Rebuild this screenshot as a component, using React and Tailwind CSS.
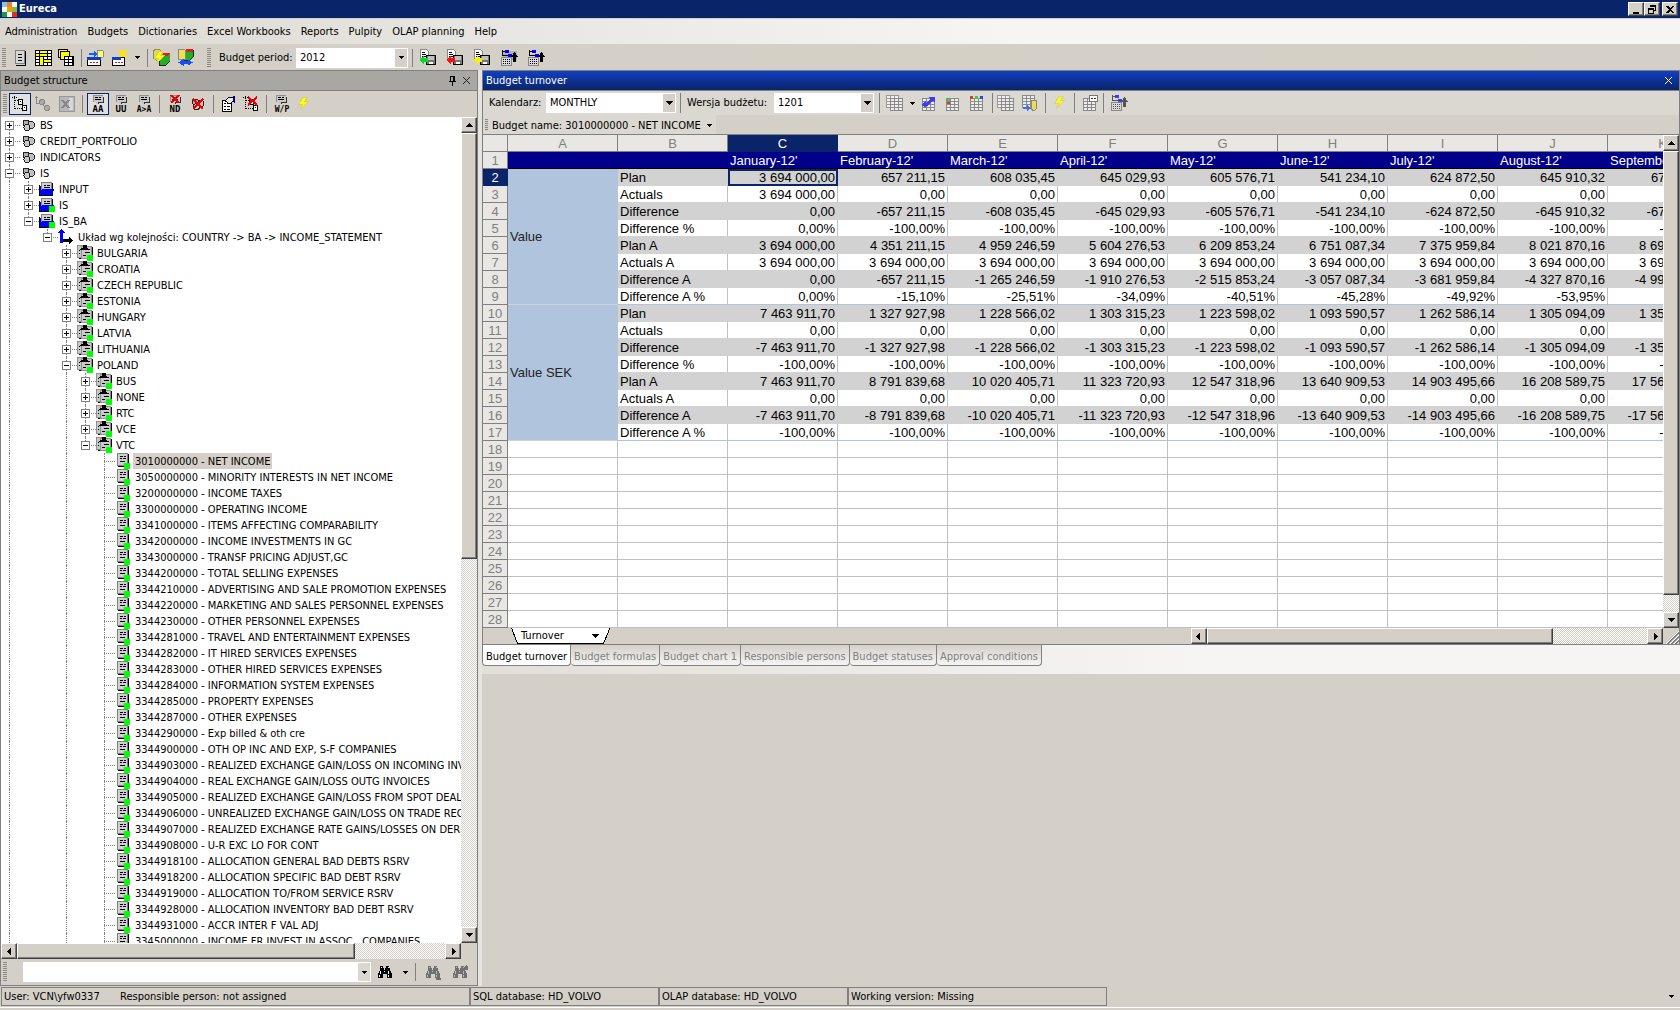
import { clsx } from "clsx";

/* ---------- data ---------- */

const MENU = ["Administration", "Budgets", "Dictionaries", "Excel Workbooks", "Reports", "Pulpity", "OLAP planning", "Help"];

// depth, label, icon, state ("+", "-" or ""), last sibling
const TREE = [
  [0, "BS", "group", "+"],
  [0, "CREDIT_PORTFOLIO", "group", "+"],
  [0, "INDICATORS", "group", "+"],
  [0, "IS", "group", "-"],
  [1, "INPUT", "folder", "+"],
  [1, "IS", "folderOk", "+"],
  [1, "IS_BA", "folderOk", "-", true],
  [2, "Układ wg kolejności: COUNTRY -> BA -> INCOME_STATEMENT", "axes", "-", true],
  [3, "BULGARIA", "pages", "+"],
  [3, "CROATIA", "pages", "+"],
  [3, "CZECH REPUBLIC", "pages", "+"],
  [3, "ESTONIA", "pages", "+"],
  [3, "HUNGARY", "pages", "+"],
  [3, "LATVIA", "pages", "+"],
  [3, "LITHUANIA", "pages", "+"],
  [3, "POLAND", "pages", "-"],
  [4, "BUS", "pages", "+"],
  [4, "NONE", "pages", "+"],
  [4, "RTC", "pages", "+"],
  [4, "VCE", "pages", "+"],
  [4, "VTC", "pages", "-", true],
  ...[
    "3010000000 - NET INCOME",
    "3050000000 - MINORITY INTERESTS IN NET INCOME",
    "3200000000 - INCOME TAXES",
    "3300000000 - OPERATING INCOME",
    "3341000000 - ITEMS AFFECTING COMPARABILITY",
    "3342000000 - INCOME INVESTMENTS IN GC",
    "3343000000 - TRANSF PRICING ADJUST,GC",
    "3344200000 - TOTAL SELLING EXPENSES",
    "3344210000 - ADVERTISING AND SALE PROMOTION EXPENSES",
    "3344220000 - MARKETING AND SALES PERSONNEL EXPENSES",
    "3344230000 - OTHER PERSONNEL EXPENSES",
    "3344281000 - TRAVEL AND ENTERTAINMENT EXPENSES",
    "3344282000 - IT HIRED SERVICES EXPENSES",
    "3344283000 - OTHER HIRED SERVICES EXPENSES",
    "3344284000 - INFORMATION SYSTEM EXPENSES",
    "3344285000 - PROPERTY EXPENSES",
    "3344287000 - OTHER EXPENSES",
    "3344290000 - Exp billed & oth cre",
    "3344900000 - OTH OP INC AND EXP, S-F COMPANIES",
    "3344903000 - REALIZED EXCHANGE GAIN/LOSS ON INCOMING INVOICES",
    "3344904000 - REAL EXCHANGE GAIN/LOSS OUTG INVOICES",
    "3344905000 - REALIZED EXCHANGE GAIN/LOSS FROM SPOT DEALS",
    "3344906000 - UNREALIZED EXCHANGE GAIN/LOSS ON TRADE RECEIVABLES",
    "3344907000 - REALIZED EXCHANGE RATE GAINS/LOSSES ON DERIVATIVES",
    "3344908000 - U-R EXC LO FOR CONT",
    "3344918100 - ALLOCATION GENERAL BAD DEBTS RSRV",
    "3344918200 - ALLOCATION SPECIFIC BAD DEBT RSRV",
    "3344919000 - ALLOCATION TO/FROM SERVICE RSRV",
    "3344928000 - ALLOCATION INVENTORY BAD DEBT RSRV",
    "3344931000 - ACCR INTER F VAL ADJ",
    "3345000000 - INCOME FR INVEST IN ASSOC . COMPANIES",
  ].map((label) => [5, label, "page", ""]),
];

const COLUMNS = ["A", "B", "C", "D", "E", "F", "G", "H", "I", "J", "K"];
const MONTHS = ["January-12'", "February-12'", "March-12'", "April-12'", "May-12'", "June-12'", "July-12'", "August-12'", "September-12'"];

const repeat = (v) => Array(9).fill(v);
const ROWS = [
  ["Plan", ["3 694 000,00", "657 211,15", "608 035,45", "645 029,93", "605 576,71", "541 234,10", "624 872,50", "645 910,32", "671 290,11"]],
  ["Actuals", ["3 694 000,00", ...Array(8).fill("0,00")]],
  ["Difference", ["0,00", "-657 211,15", "-608 035,45", "-645 029,93", "-605 576,71", "-541 234,10", "-624 872,50", "-645 910,32", "-671 290,11"]],
  ["Difference %", ["0,00%", ...Array(8).fill("-100,00%")]],
  ["Plan A", ["3 694 000,00", "4 351 211,15", "4 959 246,59", "5 604 276,53", "6 209 853,24", "6 751 087,34", "7 375 959,84", "8 021 870,16", "8 693 160,27"]],
  ["Actuals A", repeat("3 694 000,00")],
  ["Difference A", ["0,00", "-657 211,15", "-1 265 246,59", "-1 910 276,53", "-2 515 853,24", "-3 057 087,34", "-3 681 959,84", "-4 327 870,16", "-4 999 160,27"]],
  ["Difference A %", ["0,00%", "-15,10%", "-25,51%", "-34,09%", "-40,51%", "-45,28%", "-49,92%", "-53,95%", "-57,51%"]],
  ["Plan", ["7 463 911,70", "1 327 927,98", "1 228 566,02", "1 303 315,23", "1 223 598,02", "1 093 590,57", "1 262 586,14", "1 305 094,09", "1 356 374,08"]],
  ["Actuals", repeat("0,00")],
  ["Difference", ["-7 463 911,70", "-1 327 927,98", "-1 228 566,02", "-1 303 315,23", "-1 223 598,02", "-1 093 590,57", "-1 262 586,14", "-1 305 094,09", "-1 356 374,08"]],
  ["Difference %", repeat("-100,00%")],
  ["Plan A", ["7 463 911,70", "8 791 839,68", "10 020 405,71", "11 323 720,93", "12 547 318,96", "13 640 909,53", "14 903 495,66", "16 208 589,75", "17 564 963,83"]],
  ["Actuals A", repeat("0,00")],
  ["Difference A", ["-7 463 911,70", "-8 791 839,68", "-10 020 405,71", "-11 323 720,93", "-12 547 318,96", "-13 640 909,53", "-14 903 495,66", "-16 208 589,75", "-17 564 963,83"]],
  ["Difference A %", repeat("-100,00%")],
];
const EMPTY_ROWS = [18, 19, 20, 21, 22, 23, 24, 25, 26, 27, 28];

/* ---------- drawing helpers ---------- */

function Svg({ w = 16, h = 16, label, children, className }) {
  return (
    <svg width={w} height={h} viewBox={`0 0 ${w} ${h}`} shapeRendering="crispEdges" className={clsx("shrink-0", className)} aria-hidden={!label} aria-label={label} fill="none">
      {children}
    </svg>
  );
}

const R = ({ x, y, w, h, f = "#000" }) => <rect x={x} y={y} width={w} height={h} fill={f} />;

function Sheet({ x, y, s = 1, cols = 3, rows = 4, fill = "#fff", line = "#000" }) {
  const cw = 4 * s;
  const ch = 3 * s;
  const W = cols * cw + 1;
  const H = rows * ch + 1;
  return (
    <g>
      <R x={x} y={y} w={W} h={H} f={fill} />
      {Array.from({ length: rows + 1 }, (_, i) => <R key={"r" + i} x={x} y={y + i * ch} w={W} h={1} f={line} />)}
      {Array.from({ length: cols + 1 }, (_, i) => <R key={"c" + i} x={x + i * cw} y={y} w={1} h={H} f={line} />)}
    </g>
  );
}

const Cross = () => <path d="M4 0l8 8M12 0L4 8" stroke="#f00000" strokeWidth="2" />;
const Bolt = () => <path d="M5 0h5L7 4h4L2 13l3-6H1z" fill="#ffff00" stroke="#d8d060" strokeWidth="1" />;
const Green = ({ x, y }) => <R x={x} y={y} w={6} h={6} f="#00ff00" />;

function Monitor() {
  return (
    <g>
      <path d="M3 0h9l1 1v6H9v2H6V7H3z" fill="#c8c8c8" />
      <path d="M3.500 7V.5h9" stroke="#909090" />
      <R x={5} y={2} w={3} h={1} />
      <R x={9} y={2} w={2} h={1} />
      <R x={5} y={4} w={6} h={1} />
      <path d="M13.500 2v5.500h-5v1" stroke="#333" />
    </g>
  );
}

function Caption({ children }) {
  return <text x="8" y="17" textAnchor="middle" fontFamily="DejaVu Sans Mono" fontWeight="bold" fontSize="9" fill="#000">{children}</text>;
}

function Tree2() {
  return (
    <g>
      <path d="M2.500 0v13M3 4.500h4M3 12.500h7M0 1.500h5" stroke="#000" strokeDasharray="1 1" />
      <rect x="6.500" y="3.500" width="4" height="5" fill="#fff" stroke="#000" />
      <rect x="10.500" y="9.500" width="4" height="5" fill="#fff" stroke="#000" />
      <R x={8} y={5} w={1} h={1} />
      <R x={12} y={11} w={1} h={1} />
    </g>
  );
}

function Calc({ gray }) {
  const k = gray ? "#555" : "#000";
  const b = gray ? "#4040e8" : "#0000ff";
  return (
    <g>
      <path d="M1.500 0v6M1.500 1.500h3M2 5.500h5" stroke={k} />
      <R x={4} y={0} w={4} h={3} f={b} />
      <R x={7} y={4} w={4} h={3} f={b} />
      <rect x=".5" y="7.500" width="10" height="8" fill="#d8d8d8" stroke="#888" />
      <path d="M2 9.500h7M2 11.500h7M2 13.500h7" stroke={k} strokeDasharray="1 1" />
      <path d="M12 12V7h-2l3.500-5L17 7h-2v5z" fill={k} />
    </g>
  );
}

function SaveDoc({ color }) {
  return (
    <Svg w={18} h={17}>
      <path d="M1.500.5h6l2 2v9h-8z" fill="#fff" stroke="#888" />
      <path d="M3 3.500h3M3 5.500h4M3 7.500h4" stroke="#000" />
      <rect x="7.500" y="6.500" width="9" height="9" fill="#777" stroke="#000" />
      <R x={9} y={7} w={6} h={4} f="#c0c0c0" />
      <R x={10} y={13} w={4} h={2} f="#fff" />
      <path d="M0 11l5-4v2h4v4H5v3z" fill={color} />
    </Svg>
  );
}

function GreyGrid({ children, double }) {
  return (
    <Svg w={18} h={16}>
      {double && <Sheet x={0} y={0} fill="#f0f0f0" line="#999" rows={4} />}
      <Sheet x={double ? 4 : 2} y={3} fill="#ececec" line="#8a8a8a" rows={4} />
      {children}
    </Svg>
  );
}

function Binoculars({ c = "#000", hi = "#fff", children }) {
  return (
    <Svg w={16} h={15}>
      <path d="M3 1h3v2h1v2h1V3h1V1h3v2h1v3h1v2h1v5h-5V9H6v4H1V8h1V6h1z" fill={c} />
      <R x={4} y={2} w={1} h={1} f={hi} />
      <R x={11} y={2} w={1} h={1} f={hi} />
      <R x={3} y={6} w={1} h={3} f={hi} />
      <R x={7} y={6} w={1} h={1} f={hi} />
      <R x={11} y={6} w={1} h={3} f={hi} />
      <R x={2} y={10} w={1} h={2} f={hi} />
      <R x={11} y={10} w={1} h={2} f={hi} />
      {children}
    </Svg>
  );
}

function Arrow({ dir = "down", small, color = "#000" }) {
  const d = {
    down: "M0 1h7v1H6v1H5v1H4v1H3V4H2V3H1V2H0z",
    up: "M3 1h1v1h1v1h1v1h1v1H0V4h1V3h1V2h1z",
    left: "M4 0h1v7H4V6H3V5H2V4H1V3h1V2h1V1h1z",
    right: "M2 0h1v1h1v1h1v1h1v1H5v1H4v1H3v1H2z",
  }[dir];
  return small ? (
    <Svg w={5} h={3}><path d="M0 0h5v1H4v1H3v1H2V2H1V1H0z" fill={color} /></Svg>
  ) : (
    <Svg w={7} h={7}><path d={d} fill={color} /></Svg>
  );
}

/* ---------- tree icons ---------- */

function PageShape({ x = 0 }) {
  return (
    <g transform={`translate(${x} 0)`}>
      <R x={0} y={0} w={11} h={13} f="#808080" />
      <R x={1} y={1} w={9} h={11} f="#d0d0d0" />
      <R x={11} y={1} w={1} h={13} />
      <R x={1} y={13} w={11} h={1} />
      <R x={3} y={3} w={3} h={1} />
      <R x={7} y={3} w={2} h={1} />
      <R x={3} y={5} w={2} h={1} />
      <R x={6} y={5} w={3} h={1} />
      <R x={3} y={8} w={5} h={1} />
    </g>
  );
}

const Folder = () => (
  <g>
    <path d="M0 5h3v9H0z" fill="#0000ff" />
    <path d="M.5 4v10.500h13" stroke="#000" />
    <rect x="2.500" y="1.500" width="10" height="8" fill="#d0d0d0" stroke="#808080" />
    <R x={13} y={2} w={1} h={7} />
    <path d="M5 4.500h2M8 4.500h3M5 6.500h6" stroke="#000" />
    <path d="M3 8h12v2h-1v4H1v-3h1V9h1z" fill="#0000ff" />
  </g>
);

const TREE_ICONS = {
  group: (
    <Svg>
      <circle cx="11" cy="8" r="3.500" fill="#c0c0c0" stroke="#222" />
      <circle cx="6" cy="6" r="3" fill="#b0b0b0" stroke="#222" />
      <circle cx="7" cy="10.500" r="3" fill="#c8c8c8" stroke="#222" />
    </Svg>
  ),
  folder: <Svg><Folder /></Svg>,
  folderOk: <Svg><Folder /><Green x={10} y={9} /></Svg>,
  axes: (
    <Svg>
      <path d="M2 14V4H0l3.500-4L7 4H5v10z" fill="#0000ff" />
      <path d="M5 10h6V8l4 3.500L11 15v-2H2v-2z" fill="#000" />
      <R x={2} y={10} w={3} h={3} f="#0000ff" />
    </Svg>
  ),
  pages: (
    <Svg>
      <R x={0} y={0} w={9} h={13} f="#909090" />
      <R x={1} y={1} w={7} h={11} f="#c8c8c8" />
      <path d="M2 5.500h1M2 8.500h1M2 13.500h6" stroke="#000" />
      <g transform="translate(0 1)">
        <R x={4} y={0} w={11} h={13} f="#909090" />
        <R x={5} y={1} w={9} h={11} f="#c8c8c8" />
        <R x={15} y={1} w={1} h={12} />
        <R x={8} y={6} w={5} h={1} />
        <R x={6} y={9} w={3} h={1} />
      </g>
      <path d="M3 5V4h1V3h2V0h4v3h1v1h2v1z" fill="#000" />
      <Green x={10} y={10} />
    </Svg>
  ),
  page: (
    <Svg>
      <g transform="translate(2 0)"><PageShape /></g>
      <Green x={9} y={10} />
    </Svg>
  ),
};

/* ---------- small controls ---------- */

function Grip({ className }) {
  return <span className={clsx("w-1 shrink-0 bg-[repeating-linear-gradient(#8c8a86_0_1px,#d4d0c8_1px_2px)]", className)} />;
}

function Sep({ className }) {
  return <span className={clsx("w-px shrink-0 bg-[#808080]", className)} />;
}

function Tool({ label, children, pressed, disabled, className }) {
  return (
    <button
      type="button"
      aria-label={label}
      aria-pressed={pressed ? true : undefined}
      disabled={disabled}
      className={clsx("flex h-[22px] w-[22px] shrink-0 items-center justify-center", pressed && "border border-[#0a246a] bg-[#e0dfe2]", className)}
    >
      {children}
    </button>
  );
}

function DropButton({ label, className }) {
  return (
    <button type="button" aria-label={label} className={clsx("flex h-5 w-3 shrink-0 items-center justify-center", className)}>
      <Arrow small />
    </button>
  );
}

function Combo({ id, value, className, arrow }) {
  return (
    <span className={clsx("relative flex h-5 shrink-0 items-center bg-white", className)}>
      <select id={id} defaultValue={value} className="h-full w-full appearance-none bg-transparent pr-4 pl-1 text-[11px] outline-none">
        <option>{value}</option>
      </select>
      <span className="pointer-events-none absolute inset-y-px right-px flex w-3 items-center justify-center bg-[#d4d0c8]">{arrow}</span>
    </span>
  );
}

const RAISED = "border border-t-[#ffffff] border-l-[#ffffff] border-r-[#404040] border-b-[#404040] bg-[#d4d0c8] shadow-[inset_-1px_-1px_0_#808080]";
const DITHER = "bg-[repeating-conic-gradient(#ffffff_0_25%,#d4d0c8_0_50%)] bg-[length:2px_2px]";

function ScrollButton({ dir, label }) {
  return (
    <button type="button" aria-label={label} className={clsx("flex h-4 w-4 shrink-0 items-center justify-center", RAISED)}>
      <Arrow dir={dir} />
    </button>
  );
}

/* ---------- left panel ---------- */

function Guide({ on }) {
  return (
    <span className="relative h-4 w-[19px] shrink-0">
      {on && <span className="absolute top-0 left-2 h-4 border-l border-dotted border-[#808080]" />}
    </span>
  );
}

const GUIDE_ON = [true, false, false, true, false];

function TreeRow({ depth, label, icon, state, last, first, selected }) {
  return (
    <li className="flex h-4 items-center" role="treeitem" aria-level={depth + 1} aria-selected={selected}>
      {GUIDE_ON.slice(0, depth).map((on, i) => <Guide key={i} on={on} />)}
      <span className="relative h-4 w-[19px] shrink-0">
        <span className={clsx("absolute left-2 border-l border-dotted border-[#808080]", first ? "top-2 h-2" : last ? "top-0 h-2" : "top-0 h-4")} />
        <span className="absolute top-2 left-2 w-[11px] border-t border-dotted border-[#808080]" />
        {state && (
          <button type="button" aria-label={(state === "+" ? "Expand " : "Collapse ") + label} className="absolute top-1 left-1 h-[9px] w-[9px] bg-white">
            <Svg w={9} h={9} className="block">
              <rect x=".5" y=".5" width="8" height="8" stroke="#808080" />
              <R x={2} y={4} w={5} h={1} />
              {state === "+" && <R x={4} y={2} w={1} h={5} />}
            </Svg>
          </button>
        )}
      </span>
      <span className="mr-0.5 flex w-4 shrink-0">{TREE_ICONS[icon]}</span>
      <span className={clsx("h-4 px-0.5 leading-[17px] whitespace-pre", selected && "bg-[#d4d0c8]")}>{label}</span>
    </li>
  );
}

function StructurePanel() {
  return (
    <section className="flex min-h-0 w-[478px] shrink-0 flex-col border border-[#808080]">
      <header className="flex h-5 shrink-0 items-center border-b border-[#808080] bg-[#a8a7a3] pr-1.5 pl-[3px]">
        <h2 className="flex-1">Budget structure</h2>
        <button type="button" aria-label="Pin" className="mr-1.5">
          <Svg w={7} h={10} className="block"><path d="M1 0h5v5h1v1H4v4H3V6H0V5h1z" fill="#000" /><R x={2} y={1} w={2} h={4} f="#a8a7a3" /></Svg>
        </button>
        <button type="button" aria-label="Close">
          <Svg w={9} h={9} className="block"><path d="M1 1l7 7M8 1l-7 7" stroke="#222" strokeWidth="1" /></Svg>
        </button>
      </header>

      <div className="flex h-[26px] shrink-0 items-center pl-0.5">
        <Grip className="mr-0.5 h-5" />
        <Tool label="Show tree" pressed><Svg><Tree2 /></Svg></Tool>
        <Tool label="Show nodes" disabled className="ml-px">
          <Svg>
            <path d="M1.500 0v7.500h4M0 1.500h3M6 7l5 5" stroke="#888" />
            <circle cx="7" cy="6" r="2.500" fill="#aaa" stroke="#888" />
            <circle cx="12" cy="12" r="2.500" fill="#aaa" stroke="#888" />
          </Svg>
        </Tool>
        <Tool label="Export to Excel" disabled className="ml-0.5">
          <Svg>
            <rect x=".5" y=".5" width="15" height="15" fill="#b8b8b8" stroke="#989898" />
            <R x={10} y={2} w={4} h={12} f="#d8d8d8" />
            <path d="M3 4l7 8M10 4l-7 8" stroke="#888" strokeWidth="2" />
          </Svg>
        </Tool>
        <Sep className="mx-1 h-[18px]" />
        <Tool label="Sort AA" pressed><Svg h={18}><Monitor /><Caption>AA</Caption></Svg></Tool>
        <Tool label="Sort UU" className="ml-px"><Svg h={18}><Monitor /><Caption>UU</Caption></Svg></Tool>
        <Tool label="Sort A to A" className="ml-px"><Svg w={16} h={18}><Monitor /><text x="8" y="17" textAnchor="middle" fontFamily="DejaVu Sans Mono" fontWeight="bold" fontSize="8" fill="#000">A&gt;A</text></Svg></Tool>
        <Sep className="mx-1 h-[18px]" />
        <Tool label="No data"><Svg h={18}><Monitor /><Cross /><Caption>ND</Caption></Svg></Tool>
        <Tool label="Delete group" className="ml-px">
          <Svg>
            <circle cx="10.500" cy="7.500" r="3.500" fill="#c0c0c0" stroke="#222" />
            <circle cx="5.500" cy="6" r="3" fill="#b0b0b0" stroke="#222" />
            <circle cx="6.500" cy="10.500" r="3" fill="#c8c8c8" stroke="#222" />
            <path d="M3 3l10 10M13 3L3 13" stroke="#f00000" strokeWidth="2" />
          </Svg>
        </Tool>
        <Sep className="mx-1 h-[18px]" />
        <Tool label="Properties">
          <Svg>
            <rect x="1.500" y="4.500" width="9" height="11" fill="#fff" stroke="#000" />
            <path d="M3 7.500h2M6 7.500h3M3 10.500h2M6 10.500h3M3 13.500h2M6 13.500h3" stroke="#000" />
            <path d="M4 5l4-4h4v4L9 8z" fill="#e8e8e8" stroke="#000" />
            <path d="M12 0h2v8l-2-3z" fill="#000080" />
          </Svg>
        </Tool>
        <Tool label="Delete branch"><Svg><Tree2 /><path d="M5 1l9 8M14 1L5 9" stroke="#f00000" strokeWidth="2" /></Svg></Tool>
        <Sep className="mx-1 h-[18px]" />
        <Tool label="W/P"><Svg w={18} h={18}><Monitor /><text x="9" y="17" textAnchor="middle" fontFamily="DejaVu Sans Mono" fontWeight="bold" fontSize="8" fill="#000">W/P</text></Svg></Tool>
        <Tool label="Recalculate"><Svg><g transform="translate(2 1)"><Bolt /></g></Svg></Tool>
      </div>

      <div className="flex min-h-0 flex-1 bg-white">
        <ul className="min-h-0 min-w-0 flex-1 overflow-hidden" role="tree" aria-label="Budget structure">
          {TREE.map(([depth, label, icon, state, last], i) => (
            <TreeRow key={label + i} depth={depth} label={label} icon={icon} state={state} last={last} first={i === 0} selected={label === "3010000000 - NET INCOME"} />
          ))}
        </ul>
        <div className={clsx("flex w-4 shrink-0 flex-col", DITHER)}>
          <ScrollButton dir="up" label="Scroll tree up" />
          <div className={clsx("grow-[425]", RAISED)} />
          <div className="grow-[369]" />
          <ScrollButton dir="down" label="Scroll tree down" />
        </div>
      </div>

      <div className="flex h-4 shrink-0">
        <div className={clsx("flex min-w-0 flex-1", DITHER)}>
          <ScrollButton dir="left" label="Scroll tree left" />
          <div className={clsx("grow-[338]", RAISED)} />
          <div className="grow-[90]" />
          <ScrollButton dir="right" label="Scroll tree right" />
        </div>
        <div className="w-4 bg-[#d4d0c8]" />
      </div>

      <form className="flex h-[26px] shrink-0 items-center pl-0.5" onSubmit={(e) => e.preventDefault()}>
        <Grip className="h-5" />
        <div className="ml-4 flex h-5 min-w-0 flex-1 items-center bg-white pr-px">
          <input aria-label="Find in structure" className="h-full min-w-0 flex-1 bg-transparent px-1 outline-none" />
          <button type="button" aria-label="Search history" className="flex h-[18px] w-3 items-center justify-center bg-[#dbd8d1]"><Arrow small /></button>
        </div>
        <Tool label="Find" className="ml-[3px]"><Binoculars /></Tool>
        <DropButton label="Find options" className="ml-[3px]" />
        <Sep className="mx-1 h-[18px]" />
        <Tool label="Find next" disabled className="ml-0.5"><Binoculars c="#707070" hi="#b8b8b8"><path d="M11 15h5v-2h-1V8h-3v5h-1z" fill="#707070" /></Binoculars></Tool>
        <Tool label="Find previous" disabled className="mr-1.5 ml-[5px]"><Binoculars c="#707070" hi="#b8b8b8"><path d="M13 5V3h-2l3-3 2 2v3z" fill="#707070" /></Binoculars></Tool>
      </form>
    </section>
  );
}

/* ---------- spreadsheet ---------- */

const HEAD = "border-r border-b border-[#808080] bg-[#e8e7e3] p-0 pt-px text-center font-normal text-[#808080]";
const NAVY_HEAD = "border-r border-b border-[#0a246a] bg-[#0a246a] p-0 pt-px text-center font-normal text-white";

function DataRow({ index, label, cells }) {
  const grey = index % 2 === 0;
  const endOfBlock = index === 7 || index === 15;
  const tone = clsx(
    "overflow-hidden border-r border-b p-0 pt-px whitespace-nowrap",
    grey ? "border-r-[#d2d2d2] bg-[#d2d2d2]" : "border-r-[#c0c0c0] bg-white",
    endOfBlock ? "border-b-[#b0c4de]" : "border-b-[#d2d2d2]",
  );
  return (
    <tr className="h-[17px]">
      <th scope="row" className={index === 0 ? NAVY_HEAD : HEAD}>{index + 2}</th>
      {index % 8 === 0 && (
        <td rowSpan={8} className="border-r border-b border-r-[#b0c4de] border-b-[#d2d2d2] bg-[#b0c4de] p-0 pl-0.5 align-middle text-[#222]">
          {index === 0 ? "Value" : "Value SEK"}
        </td>
      )}
      <td className={clsx(tone, "pl-0.5")}>{label}</td>
      {cells.map((value, i) => (
        <td key={i} className={clsx(tone, "pr-0.5 text-right", index === 0 && i === 0 && "outline-2 -outline-offset-2 outline-[#0a246a]")}>{value}</td>
      ))}
    </tr>
  );
}

function Spreadsheet() {
  return (
    <div className="min-w-0 flex-1 overflow-hidden">
      <table className="w-[1235px] table-fixed border-separate border-spacing-0 font-['Liberation_Sans',sans-serif] text-[13px] leading-[15px]">
        <colgroup>
          <col className="w-[25px]" />
          {COLUMNS.map((c) => <col key={c} className="w-[110px]" />)}
        </colgroup>
        <thead>
          <tr className="h-[17px]">
            <th className={HEAD} aria-label="Select all" />
            {COLUMNS.map((c) => <th key={c} scope="col" className={c === "C" ? NAVY_HEAD : HEAD}>{c}</th>)}
          </tr>
        </thead>
        <tbody>
          <tr className="h-[17px]">
            <th scope="row" className={HEAD}>1</th>
            <td colSpan={2} className="border-b border-black bg-[#00008b] p-0" />
            {MONTHS.map((m) => <td key={m} className="overflow-hidden border-b border-black bg-[#00008b] p-0 pt-px pl-0.5 whitespace-nowrap text-white">{m}</td>)}
          </tr>
          {ROWS.map(([label, cells], i) => <DataRow key={i} index={i} label={label} cells={cells} />)}
          {EMPTY_ROWS.map((n) => (
            <tr key={n} className="h-[17px]">
              <th scope="row" className={HEAD}>{n}</th>
              {COLUMNS.map((c) => <td key={c} className="border-r border-b border-[#c0c0c0] bg-white p-0" />)}
            </tr>
          ))}
        </tbody>
      </table>
    </div>
  );
}

const PAGE_TABS = ["Budget formulas", "Budget chart 1", "Responsible persons", "Budget statuses", "Approval conditions"];

function TurnoverPanel() {
  return (
    <section className="flex shrink-0 flex-col">
      <div className="border border-[#808080]">
        <header className="flex h-5 items-center border-b border-[#808080] bg-linear-to-b from-[#1140c0] to-[#0a246a] pr-1.5 pl-[3px] text-white">
          <h2 className="flex-1">Budget turnover</h2>
          <button type="button" aria-label="Close Budget turnover">
            <Svg w={9} h={9} className="block"><path d="M1 1l7 7M8 1l-7 7" stroke="#fff" strokeWidth="1" /></Svg>
          </button>
        </header>

        <div className="flex h-6 items-center bg-[#dbd8d1] pl-1.5">
          <label htmlFor="calendar" className="w-[57px] shrink-0">Kalendarz:</label>
          <Combo id="calendar" value="MONTHLY" className="w-[130px]" arrow={<Arrow />} />
          <Sep className="mx-1 h-5" />
          <label htmlFor="version" className="w-[89px] shrink-0 pl-0.5">Wersja budżetu:</label>
          <Combo id="version" value="1201" className="w-[100px]" arrow={<Arrow />} />
          <Sep className="mr-0.5 ml-[5px] h-5" />
          <Tool label="Sheets" className="ml-0.5"><GreyGrid double /></Tool>
          <DropButton label="Sheet options" />
          <Tool label="Refresh sheet">
            <GreyGrid><path d="M1 10l5-5v3l4-4-1-2h6v5l-2-1-5 4h1l-4 2z" fill="#3c3cf0" /></GreyGrid>
          </Tool>
          <Tool label="Row colours" className="ml-0.5"><GreyGrid><R x={3} y={4} w={3} h={2} f="#20e040" /><R x={3} y={7} w={3} h={2} f="#f03030" /></GreyGrid></Tool>
          <Tool label="Column colours" className="ml-0.5"><GreyGrid><R x={2} y={1} w={3} h={3} f="#f03030" /><R x={7} y={1} w={3} h={3} f="#20e040" /><R x={12} y={1} w={3} h={3} f="#3c3cf0" /></GreyGrid></Tool>
          <Sep className="mr-0.5 ml-1 h-5" />
          <Tool label="Copy sheet"><GreyGrid double /></Tool>
          <Tool label="Save to database" className="ml-0.5">
            <Svg w={18} h={16}>
              <Sheet x={1} y={0} fill="#ececec" line="#8a8a8a" rows={4} />
              <path d="M10 5h5v9l-2 2-3-2z" fill="#e8dc50" stroke="#888" />
              <path d="M2 12h4v-2l4 3.500L6 16v-2H2z" fill="#4070f0" />
            </Svg>
          </Tool>
          <Sep className="mx-1 h-5" />
          <Tool label="Calculate sheet"><Svg><g transform="translate(1 1)" opacity=".8"><Bolt /></g></Svg></Tool>
          <Sep className="mr-1 ml-0.5 h-5" />
          <Tool label="Comment"><GreyGrid><rect x="8.500" y=".5" width="8" height="6" fill="#fff" stroke="#777" /><path d="M10 3.500h5" stroke="#333" strokeDasharray="2 1" /></GreyGrid></Tool>
          <Sep className="mx-0.5 h-5" />
          <Tool label="Send to OLAP" className="ml-0.5"><Svg w={17} h={16}><Calc gray /></Svg></Tool>
        </div>

        <div className="flex h-[19px] items-center bg-[#d4d0c8]">
          <div className="flex h-full items-center bg-[#dbd8d1] pr-1 pl-0.5">
            <Grip className="mr-1 h-3 w-[3px]" />
            <button type="button" className="flex items-center gap-1.5 pt-0.5">Budget name: 3010000000 - NET INCOME<Arrow small /></button>
          </div>
        </div>

        <div className="flex border-t border-[#808080]">
          <Spreadsheet />
          <div className={clsx("flex w-4 shrink-0 flex-col", DITHER)}>
            <ScrollButton dir="up" label="Scroll sheet up" />
            <div className={clsx("flex-1", RAISED)} />
            <div className="h-[17px]" />
            <ScrollButton dir="down" label="Scroll sheet down" />
          </div>
        </div>

        <div className="flex h-4 bg-[#d4d0c8]">
          <div className="flex flex-1 pl-[27px]">
            <button type="button" className="relative flex h-4 w-[101px] items-center pl-[11px]">
              <Svg w={101} h={16} className="absolute top-0 left-0">
                <path d="M1 0h99l-7 15.500H8z" fill="#fff" />
                <path d="M1.500 0l6 15.500h86L100 0" stroke="#000" />
              </Svg>
              <span className="relative flex-1 text-left leading-4">Turnover</span>
              <span className="relative mr-3"><Arrow /></span>
            </button>
          </div>
          <div className={clsx("flex basis-[39.5%]", DITHER)}>
            <ScrollButton dir="left" label="Scroll sheet left" />
            <div className={clsx("grow-[345]", RAISED)} />
            <div className="grow-[94]" />
            <ScrollButton dir="right" label="Scroll sheet right" />
          </div>
          <Svg className="bg-[#d4d0c8]">
            <path d="M4 16L16 4M8 16l8-8M12 16l4-4" stroke="#808080" strokeWidth="2" />
            <path d="M3 16L16 3M7 16l9-9M11 16l5-5" stroke="#fff" />
          </Svg>
        </div>
      </div>

      <div role="tablist" className="flex h-[29px] items-start bg-linear-to-r from-[#e2dfd9] to-[#f6f5f4] to-60%">
        <button type="button" role="tab" aria-selected="true" className="h-[21px] rounded-b-sm border border-t-0 border-[#808080] bg-white px-[3px] pt-1">Budget turnover</button>
        {PAGE_TABS.map((tab) => (
          <button key={tab} type="button" role="tab" aria-selected="false" className="h-[21px] rounded-b-sm border border-t-0 border-l-0 border-[#808080] bg-linear-to-b from-[#d4d0c8] to-[#f6f5f4] px-[3px] pt-1 text-[#808080]">{tab}</button>
        ))}
      </div>
    </section>
  );
}

/* ---------- window frame ---------- */

function WindowButton({ label, children, className }) {
  return (
    <button type="button" aria-label={label} className={clsx("flex h-3.5 w-4 items-center justify-center", RAISED, className)}>
      <Svg w={10} h={9}>{children}</Svg>
    </button>
  );
}

function MainToolbar() {
  return (
    <div className="flex h-[26px] shrink-0 items-center pt-px pl-0.5">
      <Grip className="mr-[3px] h-5" />
      <Tool label="Budget card">
        <Svg>
          <R x={3} y={0} w={10} h={14} f="#808080" />
          <R x={4} y={1} w={8} h={12} f="#d8d8d8" />
          <path d="M13.500 1v14.500H4M6 4.500h4M6 7.500h4M6 10.500h4" stroke="#000" />
        </Svg>
      </Tool>
      <Tool label="Budget sheet" className="ml-px">
        <Svg w={17} h={16}>
          <Sheet x={0} y={0} cols={4} rows={5} />
          <R x={5} y={1} w={7} h={2} f="#ffff00" />
          <R x={5} y={4} w={7} h={2} f="#ffff00" />
          <R x={1} y={4} w={3} h={2} f="#ffff00" />
          <R x={5} y={7} w={3} h={8} f="#ffff00" />
          <R x={9} y={10} w={7} h={2} f="#ffff00" />
        </Svg>
      </Tool>
      <Tool label="Copy sheets" className="ml-px">
        <Svg w={17} h={17}>
          <rect x=".5" y=".5" width="9" height="8" fill="#ffff00" stroke="#000" />
          <rect x="2.500" y="2.500" width="9" height="8" fill="#ffff00" stroke="#000" />
          <Sheet x={6} y={7} cols={2} rows={3} />
          <R x={15} y={7} w={1} h={10} />
        </Svg>
      </Tool>
      <Sep className="mr-0.5 ml-1 h-[18px]" />
      <Tool label="Import data">
        <Svg w={17} h={16}>
          <path d="M10 1l3-1 3 1v6l-3 1-3-1z" fill="#ffff66" stroke="#888" />
          <path d="M2 3h5V1l4 3-4 3V5H2z" fill="#1060ff" />
          <rect x=".5" y="7.500" width="13" height="8" fill="#fff" stroke="#000" />
          <R x={0} y={7} w={14} h={3} f="#1040c0" />
          <path d="M3 12.500h2M6 12.500h2M9 12.500h2" stroke="#c02020" />
        </Svg>
      </Tool>
      <Tool label="New view" className="ml-[3px]">
        <Svg w={17} h={16}>
          <path d="M7 0l8 8M15 0L7 8M11 0v8" stroke="#ffe600" strokeWidth="1.500" />
          <rect x=".5" y="7.500" width="12" height="8" fill="#fff" stroke="#000" />
          <R x={0} y={7} w={9} h={3} f="#1040c0" />
          <path d="M3 12.500h2M6 12.500h2M9 12.500h2" stroke="#c02020" />
        </Svg>
      </Tool>
      <DropButton label="New view options" />
      <Sep className="mr-0.5 ml-1 h-[18px]" />
      <Tool label="Process cube">
        <Svg w={17} h={17}>
          <path d="M6 7l4-3h7v8l-4 4H6z" fill="#20b020" stroke="#222" />
          <path d="M10 4h7l-3 3H7z" fill="#e02020" />
          <path d="M0 2l3-2 4 1 2 3v6l-4 2-5-3z" fill="#e8d840" stroke="#888" />
          <g transform="translate(1 2)"><Bolt /></g>
        </Svg>
      </Tool>
      <Tool label="Synchronise cube" className="ml-0.5">
        <Svg w={17} h={17}>
          <path d="M6 3l3-2h7v7l-3 3H6z" fill="#20b020" stroke="#222" />
          <path d="M9 0h7v3H7z" fill="#e02020" />
          <path d="M1 1l3-1 4 1v9l-4 1-3-1z" fill="#f0e050" stroke="#888" />
          <path d="M2 13.500L6 11v1.500h5V11l4 2.500L11 16v-1.500H6V16z" fill="#1050ff" stroke="#1050ff" />
        </Svg>
      </Tool>
      <Grip className="mr-2 ml-[11px] h-5" />
      <label htmlFor="period" className="w-[77px] shrink-0">Budget period:</label>
      <Combo id="period" value="2012" className="w-28" arrow={<Arrow small />} />
      <Sep className="mx-1 h-[18px]" />
      <Tool label="Accept"><SaveDoc color="#00e020" /></Tool>
      <Tool label="Reject" className="ml-[5px]"><SaveDoc color="#ff1010" /></Tool>
      <Tool label="Postpone" className="ml-[5px]"><SaveDoc color="#ffee00" /></Tool>
      <Tool label="Export all to OLAP" className="ml-[5px]">
        <Svg w={17} h={16}><R x={2} y={1} w={14} h={9} f="#b0b0b0" /><Calc /></Svg>
      </Tool>
      <Tool label="Export to OLAP" className="ml-[5px]"><Svg w={17} h={16}><Calc /></Svg></Tool>
    </div>
  );
}

export default function App() {
  return (
    <div className="flex h-screen flex-col overflow-hidden bg-[#d4d0c8] font-['DejaVu_Sans_Condensed','Noto_Sans',sans-serif] text-[11px] leading-[14px] text-black">
      <div className="flex h-[18px] shrink-0 items-center bg-[#0a246a] pr-0.5 pl-0.5">
        <Svg w={15} h={15}>
          <R x={0} y={0} w={5} h={5} f="#80c8e8" />
          <R x={5} y={0} w={5} h={5} f="#f08030" />
          <R x={10} y={0} w={5} h={5} f="#fff" />
          <R x={0} y={5} w={5} h={5} f="#fff" />
          <R x={5} y={5} w={5} h={5} f="#e8a800" />
          <R x={10} y={5} w={5} h={5} f="#80c040" />
          <R x={0} y={10} w={5} h={5} f="#10a040" />
          <R x={5} y={10} w={5} h={5} f="#fff" />
          <R x={10} y={10} w={5} h={5} f="#e03020" />
        </Svg>
        <h1 className="flex-1 pl-0.5 font-bold text-white">Eureca</h1>
        <WindowButton label="Minimise"><R x={2} y={7} w={6} h={2} /></WindowButton>
        <WindowButton label="Restore">
          <path d="M3 2V0h6v6H7V5h1V2zM1 3h6v6H1z" fill="#000" />
          <R x={2} y={5} w={4} h={3} f="#d4d0c8" />
        </WindowButton>
        <WindowButton label="Close" className="ml-0.5"><path d="M1 1h2l2 2 2-2h2L6 4.500 9 8H7L5 6 3 8H1l3-3.500z" fill="#000" /></WindowButton>
      </div>

      <nav className="flex h-[26px] shrink-0 items-center gap-x-2.5 border-t border-[#d4d0c8] bg-linear-to-r from-[#dbd8d1] to-[#f6f5f4] to-60% pl-[5px]">
        {MENU.map((item) => <button key={item} type="button">{item}</button>)}
      </nav>

      <MainToolbar />

      <main className="flex min-h-0 flex-1">
        <StructurePanel />
        <div className="flex min-w-0 flex-1 flex-col border-l-4 border-[#e6e4df]">
          <TurnoverPanel />
          <div className="flex-1 bg-[#d4d0c8]" />
        </div>
      </main>

      <footer className="mb-0.5 flex h-[22px] shrink-0 items-start border-b border-white pt-px pl-px">
        <div className="flex h-[19px] w-[469px] items-center border border-[#808080] pl-0.5">
          <span className="w-[116px]">User: VCN\yfw0337</span>
          <span>Responsible person: not assigned</span>
        </div>
        <div className="flex h-[19px] w-[189px] items-center border border-[#808080] pl-0.5">SQL database: HD_VOLVO</div>
        <div className="flex h-[19px] w-[189px] items-center border border-[#808080] pl-0.5">OLAP database: HD_VOLVO</div>
        <div className="flex h-[19px] w-[259px] items-center border border-[#808080] pl-0.5">Working version: Missing</div>
        <button type="button" aria-label="Status bar options" className="mt-2 mr-1.5 ml-auto"><Arrow small /></button>
      </footer>
    </div>
  );
}
